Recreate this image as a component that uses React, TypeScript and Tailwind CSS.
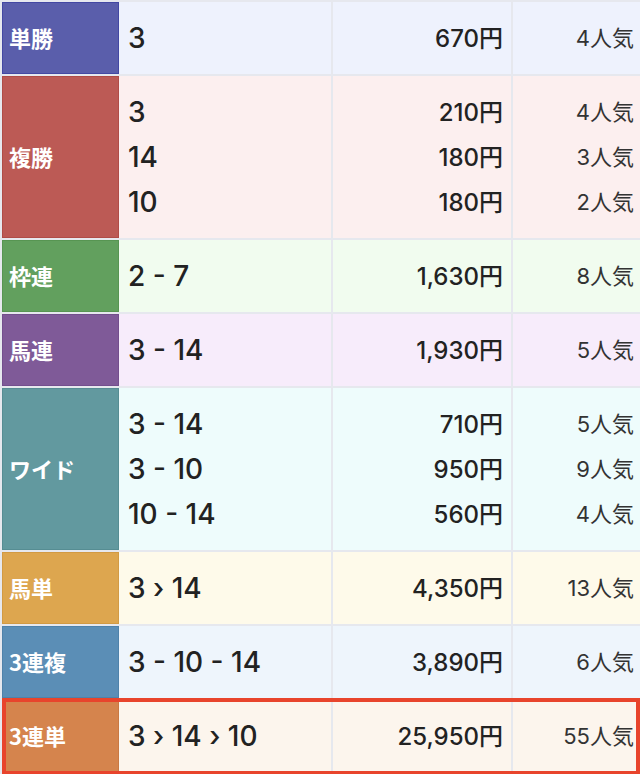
type Row = {
  label: string;
  labelBg: string;
  labelBorder: string;
  rowBg: string;
  items: { combo: string; pay: string; pop: string }[];
  highlight?: boolean;
};

const rows: Row[] = [
  {
    label: "単勝",
    labelBg: "bg-[#5a5eab]",
    labelBorder: "border-[#4348a3]",
    rowBg: "bg-[#eef2fd]",
    items: [{ combo: "3", pay: "670円", pop: "4人気" }],
  },
  {
    label: "複勝",
    labelBg: "bg-[#bc5a55]",
    labelBorder: "border-[#b04c47]",
    rowBg: "bg-[#fcefef]",
    items: [
      { combo: "3", pay: "210円", pop: "4人気" },
      { combo: "14", pay: "180円", pop: "3人気" },
      { combo: "10", pay: "180円", pop: "2人気" },
    ],
  },
  {
    label: "枠連",
    labelBg: "bg-[#62a05e]",
    labelBorder: "border-[#579552]",
    rowBg: "bg-[#f1fcef]",
    items: [{ combo: "2 - 7", pay: "1,630円", pop: "8人気" }],
  },
  {
    label: "馬連",
    labelBg: "bg-[#7f5a98]",
    labelBorder: "border-[#734e8d]",
    rowBg: "bg-[#f7ecfb]",
    items: [{ combo: "3 - 14", pay: "1,930円", pop: "5人気" }],
  },
  {
    label: "ワイド",
    labelBg: "bg-[#62999f]",
    labelBorder: "border-[#568d93]",
    rowBg: "bg-[#eefcfc]",
    items: [
      { combo: "3 - 14", pay: "710円", pop: "5人気" },
      { combo: "3 - 10", pay: "950円", pop: "9人気" },
      { combo: "10 - 14", pay: "560円", pop: "4人気" },
    ],
  },
  {
    label: "馬単",
    labelBg: "bg-[#dda64f]",
    labelBorder: "border-[#d29a43]",
    rowBg: "bg-[#fefaea]",
    items: [{ combo: "3 › 14", pay: "4,350円", pop: "13人気" }],
  },
  {
    label: "3連複",
    labelBg: "bg-[#5b8eb6]",
    labelBorder: "border-[#4f82aa]",
    rowBg: "bg-[#eef5fc]",
    items: [{ combo: "3 - 10 - 14", pay: "3,890円", pop: "6人気" }],
  },
  {
    label: "3連単",
    labelBg: "bg-[#d5844d]",
    labelBorder: "border-[#c97842]",
    rowBg: "bg-[#fcf5ed]",
    items: [{ combo: "3 › 14 › 10", pay: "25,950円", pop: "55人気" }],
    highlight: true,
  },
];

const num = { fontFamily: 'Inter, "Noto Sans CJK JP", sans-serif' };

function PayoutRow({ row }: { row: Row }) {
  return (
    <div className="relative flex">
      <div
        className={`w-[117px] shrink-0 flex items-center pl-[6px] pb-[2px] border ${row.labelBg} ${row.labelBorder} text-white font-bold text-[22px]`}
      >
        {row.label}
      </div>
      <div className={`w-[212px] shrink-0 ${row.rowBg} py-[13.5px] pl-[9px]`} style={num}>
        {row.items.map((it, i) => (
          <div key={i} className="leading-[45px] text-[28px] font-medium text-[#222]">
            {it.combo}
          </div>
        ))}
      </div>
      <div className={`w-[178px] shrink-0 ml-[2px] ${row.rowBg} py-[13.5px] pr-[8px] text-right`} style={num}>
        {row.items.map((it, i) => (
          <div key={i} className="leading-[45px] text-[24px] font-medium text-[#222]">
            {it.pay}
          </div>
        ))}
      </div>
      <div className={`flex-1 ml-[2px] ${row.rowBg} py-[13.5px] pr-[6px] text-right`} style={num}>
        {row.items.map((it, i) => (
          <div key={i} className="leading-[45px] text-[22px] text-[#333]">
            {it.pop}
          </div>
        ))}
      </div>
      {row.highlight && (
        <div className="pointer-events-none absolute -top-[2px] left-0 right-0 -bottom-[3px] border-[4px] border-[#e8442c]" />
      )}
    </div>
  );
}

export default function App() {
  return (
    <div
      className="w-[640px] h-[774px] overflow-hidden bg-[#e6e8ee] pt-[2px] pl-[2px] flex flex-col gap-[2px]"
      style={{ fontFamily: '"Noto Sans CJK JP", "Noto Sans", sans-serif' }}
    >
      {rows.map((r) => (
        <PayoutRow key={r.label} row={r} />
      ))}
    </div>
  );
}
